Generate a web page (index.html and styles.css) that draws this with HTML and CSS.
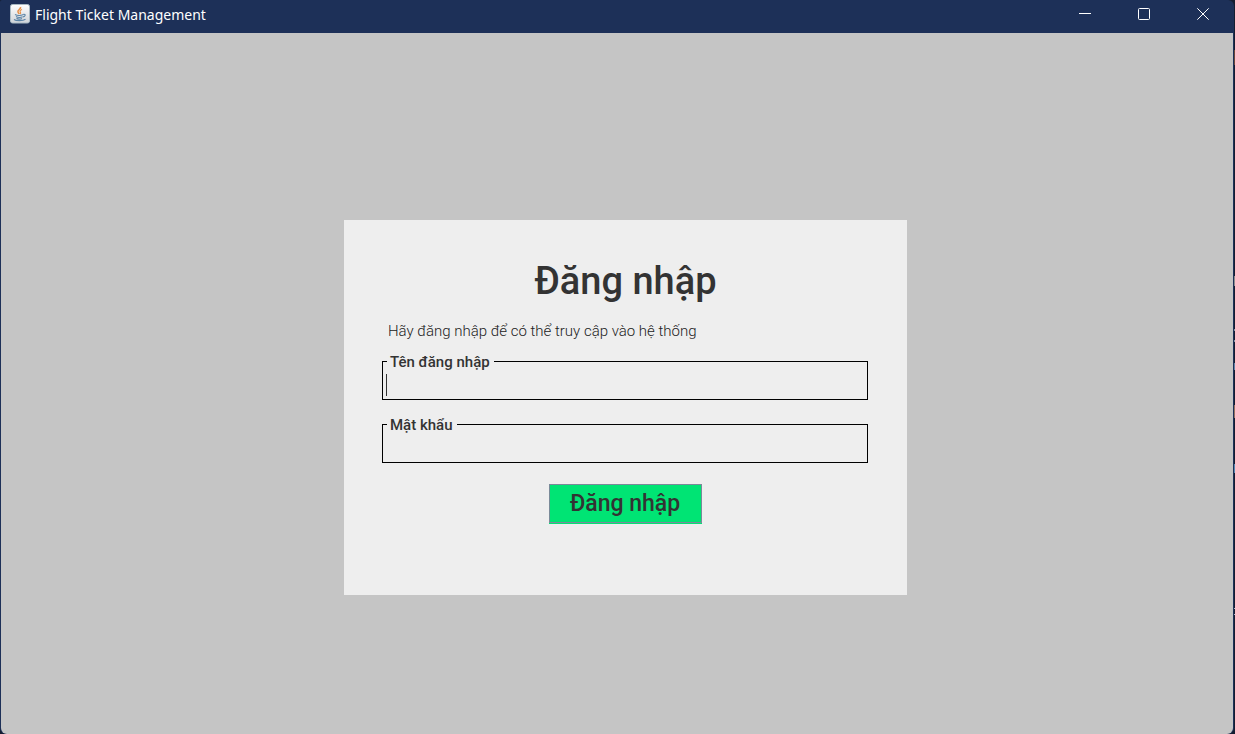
FILE: index.html
```html
<!DOCTYPE html>
<html lang="vi">
<head>
<meta charset="utf-8">
<title>Flight Ticket Management</title>
<link rel="stylesheet" href="styles.css">
</head>
<body>
<div class="desktop">
  <div class="window">
    <header class="titlebar">
      <svg class="app-icon" viewBox="0 0 20 20" aria-hidden="true">
        <defs>
          <linearGradient id="tile" x1="0" y1="0" x2="0" y2="1">
            <stop offset="0" stop-color="#ffffff"/>
            <stop offset="1" stop-color="#cfd3d8"/>
          </linearGradient>
        </defs>
        <rect x="0.5" y="0.5" width="19" height="18.5" rx="2" fill="url(#tile)" stroke="#a9bac4"/>
        <path d="M10.5 3C11.5 5 7 6 8 8C8.3 8.8 9 9.2 9.2 10" fill="none" stroke="#e8924a" stroke-width="1.6"/>
        <path d="M12 5.500C9.500 6.500 9.800 7.500 10.500 8.300C10.900 8.900 10.500 9.500 10 10" fill="none" stroke="#e8924a" stroke-width="1.100"/>
        <path d="M5 10.500C7 11.600 11 11.600 13.500 10.600M6 12.500C8 13.600 11 13.500 12.600 12.700M6.500 14.300C8 15.200 10.500 15.200 12 14.400M13.500 10.300C16 9.900 15.500 12.500 13 12.900M4 15.500C6 17 13 17 15.500 15.300" fill="none" stroke="#5c84a6" stroke-width="1.100"/>
      </svg>
      <span class="app-title">Flight Ticket Management</span>
      <div class="controls">
        <button class="control" type="button" aria-label="Minimize">
          <svg class="glyph" viewBox="0 0 12 12"><path d="M0 5.500H12"/></svg>
        </button>
        <button class="control" type="button" aria-label="Maximize">
          <svg class="glyph" viewBox="0 0 12 12"><rect x="0.5" y="0.5" width="11" height="11" rx="1"/></svg>
        </button>
        <button class="control" type="button" aria-label="Close">
          <svg class="glyph" viewBox="0 0 12 12"><path d="M0.300 0.300L11.700 11.700M11.700 0.300L0.300 11.700"/></svg>
        </button>
      </div>
    </header>
    <main class="content">
      <form class="card">
        <h1 class="heading">Đăng nhập</h1>
        <p class="hint">Hãy đăng nhập để có thể truy cập vào hệ thống</p>
        <fieldset class="field">
          <legend class="legend"><label for="username">Tên đăng nhập</label></legend>
          <span class="caret"></span>
          <input class="input" id="username" type="text">
        </fieldset>
        <fieldset class="field">
          <legend class="legend"><label for="password">Mật khẩu</label></legend>
          <input class="input" id="password" type="password">
        </fieldset>
        <button class="submit" type="button">Đăng nhập</button>
      </form>
    </main>
  </div>
</div>
</body>
</html>
```

FILE: styles.css
```css
* {
  box-sizing: border-box;
}

body {
  margin: 0;
  font-family: Roboto, sans-serif;
  color: #333;
}

.desktop {
  min-height: 100vh;
  display: flex;
  padding-right: 1px;
  background:
    linear-gradient(#6a4638, #6a4638) right 50px / 1px 15px no-repeat,
    linear-gradient(#8c8c8c, #8c8c8c) right 276px / 1px 10px no-repeat,
    linear-gradient(#8894a4, #8894a4) right 329px / 1px 2px no-repeat,
    linear-gradient(#8894a4, #8894a4) right 340px / 1px 2px no-repeat,
    linear-gradient(#5f83a6, #5f83a6) right 363px / 1px 7px no-repeat,
    linear-gradient(#94705f, #94705f) right 405px / 1px 13px no-repeat,
    linear-gradient(#5688b0, #5688b0) right 464px / 1px 9px no-repeat,
    linear-gradient(#a8b4c4, #a8b4c4) right 608px / 1px 1px no-repeat,
    linear-gradient(#a8b4c4, #a8b4c4) right 614px / 1px 1px no-repeat,
    #151d30;
}

.window {
  flex: 1;
  display: flex;
  flex-direction: column;
  padding: 0 1px;
  background: #1d3058;
  border-radius: 2px 6px 6px 6px;
}

.titlebar {
  display: flex;
  align-items: flex-start;
  height: 33px;
  padding: 0 1px 0 9px;
  color: #fff;
}

.app-icon {
  width: 20px;
  height: 20px;
  margin-top: 4px;
}

.app-title {
  margin-left: 5px;
  font-family: "Noto Sans", "Open Sans", sans-serif;
  font-size: 14px;
  line-height: 20px;
  margin-top: 5px;
}

.controls {
  display: flex;
  margin-left: auto;
}

.control {
  display: flex;
  align-items: center;
  justify-content: center;
  width: 59px;
  height: 28px;
  padding: 0;
  border: 0;
  background: none;
}

.glyph {
  width: 12px;
  height: 12px;
  fill: none;
  stroke: #fff;
  stroke-width: 1;
}

.content {
  flex: 1;
  display: flex;
  align-items: center;
  justify-content: center;
  padding: 48px 0 0 17px;
  background: #c5c5c5;
  border-radius: 0 0 6px 6px;
}

.card {
  display: flex;
  flex-direction: column;
  width: 563px;
  max-width: 100%;
  padding: 37px 39px 71px 38px;
  background: #eee;
}

.heading {
  margin: 0;
  padding-left: 1px;
  font-size: 38px;
  font-weight: 500;
  line-height: 48px;
  text-align: center;
}

.hint {
  margin: 15px 0 0;
  padding-left: 6px;
  font-size: 15px;
  font-weight: 300;
  line-height: 22px;
  color: #222;
}

.field {
  position: relative;
  min-width: 0;
  margin: 9px 0 0;
  padding: 0;
  border: 1px solid #000;
}

.field + .field {
  margin-top: 14px;
}

.legend {
  margin-left: 4px;
  padding: 2px 4px 0 3px;
  font-size: 15px;
  font-weight: 500;
  line-height: 18px;
}

.caret {
  position: absolute;
  left: 3px;
  top: 3px;
  width: 1px;
  height: 22px;
  background: #333;
}

.input {
  display: block;
  width: 100%;
  height: 28px;
  padding: 0 4px;
  border: 0;
  outline: 0;
  background: none;
  font: 18px Roboto, sans-serif;
  color: #333;
}

.submit {
  align-self: center;
  min-width: 153px;
  margin: 21px 0 1px;
  padding: 0 20px;
  border: 1px solid #7a8a99;
  background: #00e474;
  box-shadow: 0 1px #00e474;
  color: #333;
  font: 500 23px/37px Roboto, sans-serif;
}
```
